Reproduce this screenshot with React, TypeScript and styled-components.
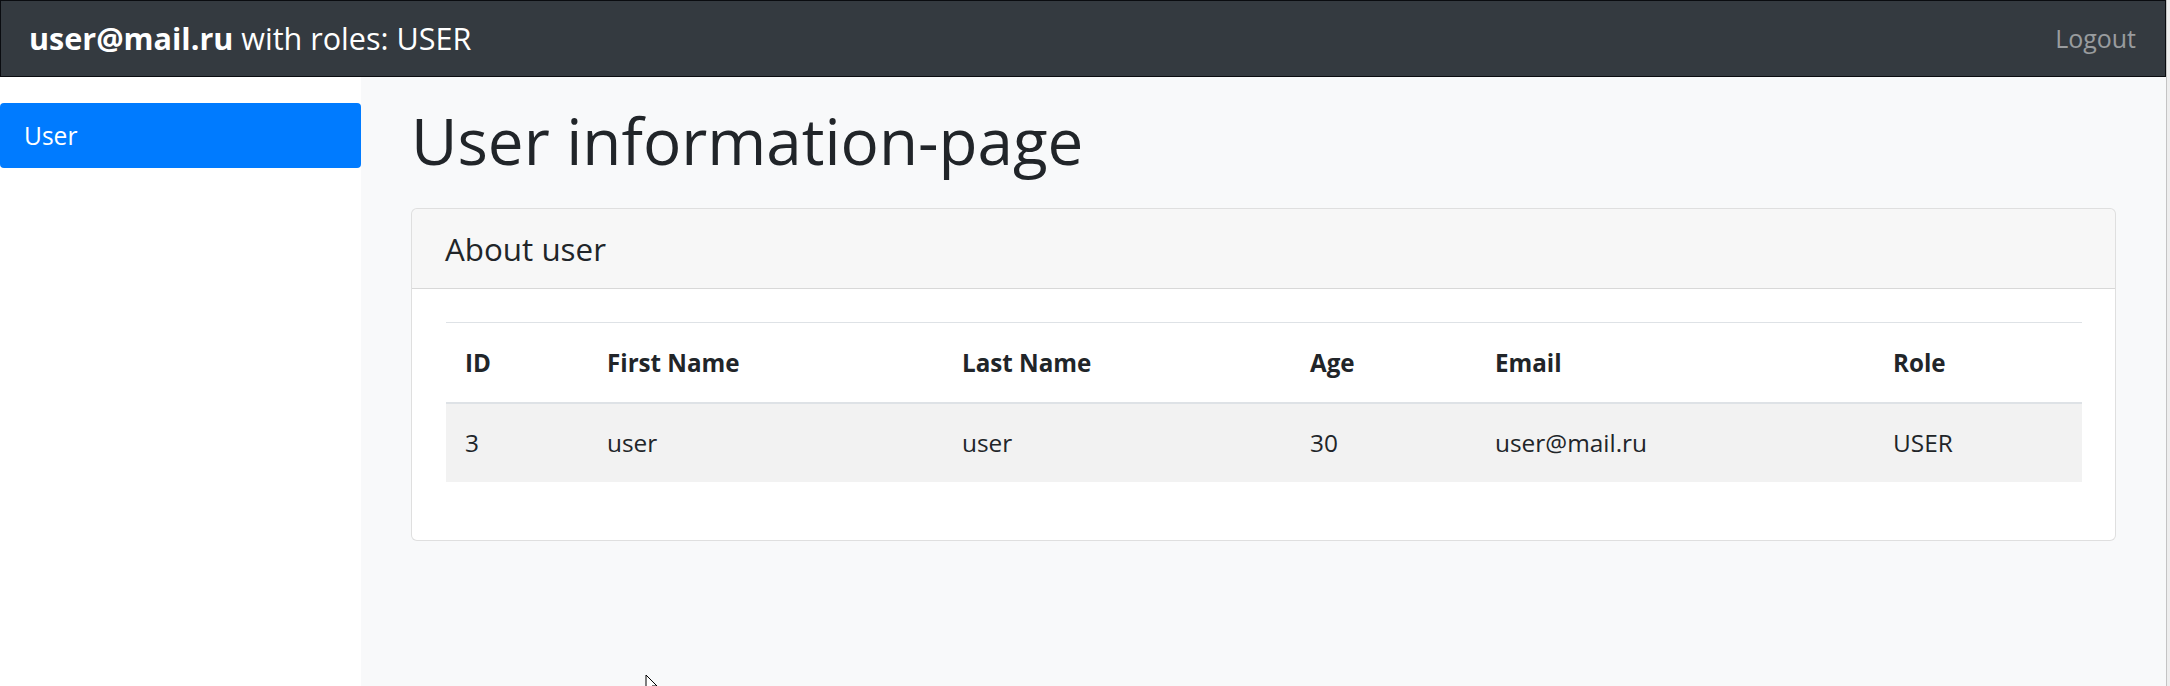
import React from "react";
import styled, { createGlobalStyle } from "styled-components";

const FONT = `"Open Sans", "Noto Sans", Arial, sans-serif`;
const fs = (px: number, k: number) => `${(px * k).toFixed(2)}px`;

const Global = createGlobalStyle`
  html, body { margin: 0; padding: 0; height: 686px; overflow: hidden; background: #eeeeee; }
  body { font-family: ${FONT}; color: #212529; }
  *, *::before, *::after { box-sizing: border-box; }
`;

const Screen = styled.div`
  position: relative;
  width: 2167px;
  height: 686px;
  display: flex;
  flex-direction: column;
  border-right: 1px solid #c4c4c4;
  overflow: hidden;
  background: #ffffff;
`;

const NavBar = styled.header`
  flex: 0 0 77px;
  height: 77px;
  display: flex;
  align-items: center;
  justify-content: space-between;
  padding: 0 29px 0 28px;
  background: #343a40;
  border: 1px solid #0a0c10;
`;

const Brand = styled.div`
  color: #ffffff;
  font-size: ${fs(33, 0.926)};
  line-height: 49.5px;
  white-space: nowrap;
`;

const BrandStrong = styled.b`
  font-weight: 700;
`;

const NavLink = styled.a`
  color: rgba(255, 255, 255, 0.5);
  font-size: ${fs(26.4, 0.945)};
  line-height: 39.6px;
  text-decoration: none;
  cursor: pointer;
`;

const Body = styled.div`
  flex: 1;
  display: flex;
  min-height: 0;
`;

const Sidebar = styled.nav`
  flex: 0 0 361px;
  background: #ffffff;
  padding-top: 26px;
`;

const PillLink = styled.a<{ $active?: boolean }>`
  display: block;
  height: 65px;
  padding: 13px 24px;
  border-radius: 4px;
  font-size: ${fs(26.4, 0.93)};
  line-height: 39.6px;
  color: ${(p) => (p.$active ? "#ffffff" : "#007bff")};
  background: ${(p) => (p.$active ? "#007bff" : "transparent")};
  text-decoration: none;
`;

const Main = styled.main`
  flex: 1;
  background: #f8f9fa;
  padding: 24px 50px 0 50px;
`;

const Title = styled.h1`
  margin: 0 0 28px 0;
  font-size: ${fs(66, 0.966)};
  font-weight: 400;
  line-height: 79.2px;
  color: #212529;
`;

const Card = styled.section`
  background: #ffffff;
  border: 1px solid rgba(0, 0, 0, 0.125);
  border-radius: 6px;
  overflow: hidden;
`;

const CardHeader = styled.div`
  padding: 19.8px 33px;
  background: rgba(0, 0, 0, 0.03);
  border-bottom: 1px solid rgba(0, 0, 0, 0.125);
`;

const CardTitle = styled.h5`
  margin: 0;
  font-size: ${fs(33, 0.95)};
  font-weight: 400;
  line-height: 39.6px;
  color: #212529;
`;

const CardBody = styled.div`
  padding: 33px 33px 33px 34px;
`;

const Table = styled.table`
  width: 100%;
  border-collapse: collapse;
  table-layout: fixed;
  margin-bottom: 25px;
  color: #212529;
`;

const Th = styled.th<{ $w: number }>`
  width: ${(p) => p.$w}px;
  padding: 19.8px 19px 19px 19px;
  text-align: left;
  font-size: ${fs(26.4, 0.915)};
  font-weight: 700;
  line-height: 39.6px;
  border-top: 1px solid #dee2e6;
  border-bottom: 2px solid #dee2e6;
`;

const Tr = styled.tr<{ $striped?: boolean }>`
  background: ${(p) => (p.$striped ? "rgba(0, 0, 0, 0.05)" : "transparent")};
`;

const Td = styled.td`
  padding: 19.5px 19px;
  font-size: ${fs(26.4, 0.925)};
  line-height: 39.6px;
  font-weight: 400;
`;

const Pointer = styled.svg`
  position: absolute;
  left: 645px;
  top: 674px;
  width: 14px;
  height: 22px;
`;

const columns = [
  { label: "ID", w: 142 },
  { label: "First Name", w: 355 },
  { label: "Last Name", w: 348 },
  { label: "Age", w: 185 },
  { label: "Email", w: 398 },
  { label: "Role", w: 208 },
];

const rows = [["3", "user", "user", "30", "user@mail.ru", "USER"]];

export default function App() {
  return (
    <>
      <Global />
      <Screen>
        <NavBar>
          <Brand>
            <BrandStrong>user@mail.ru</BrandStrong> with roles: USER
          </Brand>
          <NavLink>Logout</NavLink>
        </NavBar>
        <Body>
          <Sidebar>
            <PillLink $active>User</PillLink>
          </Sidebar>
          <Main>
            <Title>User information-page</Title>
            <Card>
              <CardHeader>
                <CardTitle>About user</CardTitle>
              </CardHeader>
              <CardBody>
                <Table>
                  <thead>
                    <tr>
                      {columns.map((c) => (
                        <Th key={c.label} $w={c.w}>
                          {c.label}
                        </Th>
                      ))}
                    </tr>
                  </thead>
                  <tbody>
                    {rows.map((r, i) => (
                      <Tr key={i} $striped={i % 2 === 0}>
                        {r.map((v, j) => (
                          <Td key={j}>{v}</Td>
                        ))}
                      </Tr>
                    ))}
                  </tbody>
                </Table>
              </CardBody>
            </Card>
          </Main>
        </Body>
        <Pointer viewBox="0 0 14 22">
          <path d="M1 1 L1 17 L5 13 L8 20 L10 19 L7 12 L12 12 Z" fill="#ffffff" stroke="#000000" strokeWidth="1" />
        </Pointer>
      </Screen>
    </>
  );
}
